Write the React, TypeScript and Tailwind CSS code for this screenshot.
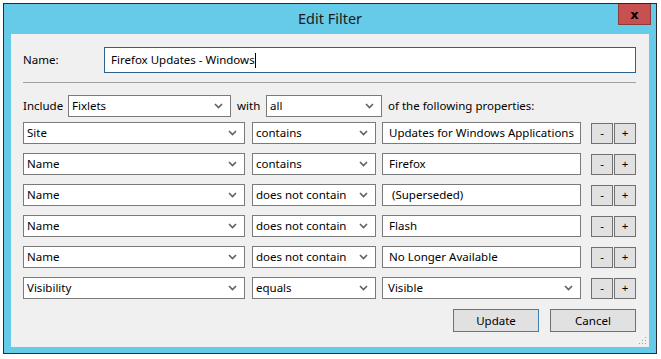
import React from "react";

const font = { fontFamily: '"Noto Sans", "Open Sans", sans-serif' };

function Chevron() {
  return (
    <svg width="9" height="6" viewBox="0 0 9 6" className="shrink-0">
      <polyline points="1,1 4.5,4.5 8,1" fill="none" stroke="#606060" strokeWidth="1.6" />
    </svg>
  );
}

function Select({ value, className }: { value: string; className: string }) {
  return (
    <div
      className={`flex items-center justify-between h-[22px] bg-white border border-[#7a7a7a] pl-[3px] pr-[7px] ${className}`}
    >
      <span className="whitespace-nowrap leading-[16px]">{value}</span>
      <Chevron />
    </div>
  );
}

function TextBox({ value }: { value: string }) {
  return (
    <div className="flex items-center h-[22px] w-[199px] bg-white border border-[#7a7a7a] pl-[6px]">
      <span className="whitespace-pre leading-[16px]">{value}</span>
    </div>
  );
}

function SmallButton({ label }: { label: string }) {
  return (
    <div className="flex items-center justify-center w-[22px] h-[21px] bg-[#e1e1e1] border border-[#707070] leading-[16px]">
      {label}
    </div>
  );
}

const rows = [
  { field: "Site", op: "contains", value: "Updates for Windows Applications" },
  { field: "Name", op: "contains", value: "Firefox" },
  { field: "Name", op: "does not contain", value: " (Superseded)" },
  { field: "Name", op: "does not contain", value: "Flash" },
  { field: "Name", op: "does not contain", value: "No Longer Available" },
];

export default function App() {
  return (
    <div className="w-[661px] h-[359px] bg-white pt-[3px] pl-[3px] text-[11.5px] text-black" style={font}>
      <div className="w-[654px] h-[351px] border border-[#2b2b2b] bg-[#65cbe9] flex flex-col">
        {/* title bar */}
        <div className="relative h-[30px] flex items-center justify-center">
          <span className="text-[14.5px] text-[#1a1a1a]">Edit Filter</span>
          <div className="absolute right-[5px] top-0 w-[33px] h-[21px] bg-[#c75050] border border-[#8c3a3a] border-t-0 flex items-center justify-center">
            <span className="text-[13px] font-bold leading-none text-black" style={{ fontFamily: '"DejaVu Sans", sans-serif' }}>
              x
            </span>
          </div>
        </div>

        {/* client area */}
        <div className="relative mx-[7px] h-[313px] bg-[#f0f0f0] pl-[12px] pr-[13px] pt-[13px] flex flex-col">
          <div className="flex items-center h-[26px]">
            <span className="w-[81px]">Name:</span>
            <div className="flex-1 h-[26px] bg-white border border-[#2c628b] flex items-center pl-[6px]">
              <span className="leading-[16px]">Firefox Updates - Windows</span>
              <span className="inline-block w-px h-[15px] bg-black" />
            </div>
          </div>

          <div className="mt-[9px] h-px bg-[#a0a0a0]" />

          <div className="mt-[12px] flex items-center h-[22px]">
            <span className="w-[45px]">Include</span>
            <Select value="Fixlets" className="w-[163px]" />
            <span className="ml-[6px] w-[29px]">with</span>
            <Select value="all" className="w-[116px]" />
            <span className="ml-[6px]">of the following properties:</span>
          </div>

          <div className="mt-[5px] flex flex-col gap-[9px]">
            {rows.map((r, i) => (
              <div key={i} className="flex items-center h-[22px]">
                <Select value={r.field} className="w-[222px]" />
                <Select value={r.op} className="ml-[7px] w-[124px]" />
                <div className="ml-[6px]">
                  <TextBox value={r.value} />
                </div>
                <div className="ml-[10px] flex gap-[1px]">
                  <SmallButton label="-" />
                  <SmallButton label="+" />
                </div>
              </div>
            ))}
            <div className="flex items-center h-[22px]">
              <Select value="Visibility" className="w-[222px]" />
              <Select value="equals" className="ml-[7px] w-[124px]" />
              <Select value="Visible" className="ml-[6px] w-[199px] pl-[5px]" />
              <div className="ml-[10px] flex gap-[1px]">
                <SmallButton label="-" />
                <SmallButton label="+" />
              </div>
            </div>
          </div>

          <div className="mt-[10px] flex justify-end gap-[11px]">
            <div className="w-[86px] h-[23px] bg-[#e1e1e1] border border-[#3c7fb1] flex items-center justify-center">
              Update
            </div>
            <div className="w-[86px] h-[23px] bg-[#e1e1e1] border border-[#707070] flex items-center justify-center">
              Cancel
            </div>
          </div>

          {/* resize grip */}
          <svg className="absolute right-[2px] bottom-[2px]" width="10" height="10" viewBox="0 0 10 10">
            {[
              [8, 2],
              [8, 5],
              [5, 5],
              [8, 8],
              [5, 8],
              [2, 8],
            ].map(([x, y], i) => (
              <rect key={i} x={x} y={y} width="1" height="1" fill="#a0a0a0" />
            ))}
          </svg>
        </div>
      </div>
    </div>
  );
}
